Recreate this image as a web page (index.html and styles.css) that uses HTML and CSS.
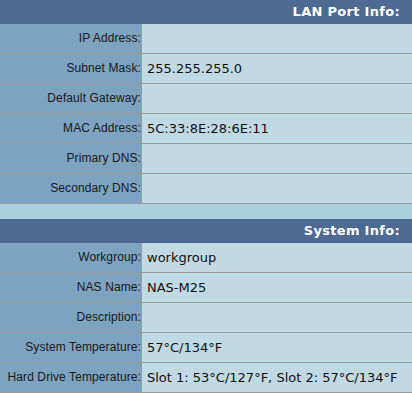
FILE: index.html
```html
<!DOCTYPE html>
<html lang="en">
<head>
<meta charset="UTF-8">
<meta name="viewport" content="width=device-width, initial-scale=1.0">
<title>Status</title>
<link rel="stylesheet" href="styles.css">
</head>
<body>
  <div class="panel">
    <div class="panel-title">LAN Port Info:</div>
    <div class="row"><div class="label">IP Address:</div><div class="value"></div></div>
    <div class="row"><div class="label">Subnet Mask:</div><div class="value">255.255.255.0</div></div>
    <div class="row"><div class="label">Default Gateway:</div><div class="value"></div></div>
    <div class="row"><div class="label">MAC Address:</div><div class="value">5C:33:8E:28:6E:11</div></div>
    <div class="row"><div class="label">Primary DNS:</div><div class="value"></div></div>
    <div class="row"><div class="label">Secondary DNS:</div><div class="value"></div></div>
  </div>

  <div class="panel">
    <div class="panel-title">System Info:</div>
    <div class="row"><div class="label">Workgroup:</div><div class="value">workgroup</div></div>
    <div class="row"><div class="label">NAS Name:</div><div class="value">NAS-M25</div></div>
    <div class="row"><div class="label">Description:</div><div class="value"></div></div>
    <div class="row"><div class="label">System Temperature:</div><div class="value">57°C/134°F</div></div>
    <div class="row"><div class="label">Hard Drive Temperature:</div><div class="value">Slot 1: 53°C/127°F, Slot 2: 57°C/134°F</div></div>
  </div>
</body>
</html>
```

FILE: styles.css
```css
body {
  margin: 0;
  padding: 0;
  background-color: #a9d0de;
  font-family: "Liberation Sans", Arial, sans-serif;
}

.panel {
  margin-bottom: 15px;
}

.panel-title {
  height: 24px;
  line-height: 24px;
  background-color: #4c6a92;
  color: #ffffff;
  font-family: "DejaVu Sans", Verdana, sans-serif;
  font-weight: bold;
  font-size: 13px;
  letter-spacing: 0.3px;
  text-align: right;
  padding-right: 12px;
}

.row {
  display: grid;
  grid-template-columns: 142px 1fr;
  height: 29px;
  border-bottom: 1px solid #9a9a9a;
}

.label {
  background-color: #7ca3bf;
  border-right: 1px solid #9a9a9a;
  text-align: right;
  font-size: 12px;
  letter-spacing: 0.1px;
  line-height: 29px;
  color: #1a1a1a;
  white-space: nowrap;
}

.value {
  background-color: #c1d9e2;
  padding-left: 5px;
  font-family: "DejaVu Sans", Verdana, sans-serif;
  font-size: 13px;
  line-height: 29px;
  color: #111111;
  white-space: nowrap;
}
```
